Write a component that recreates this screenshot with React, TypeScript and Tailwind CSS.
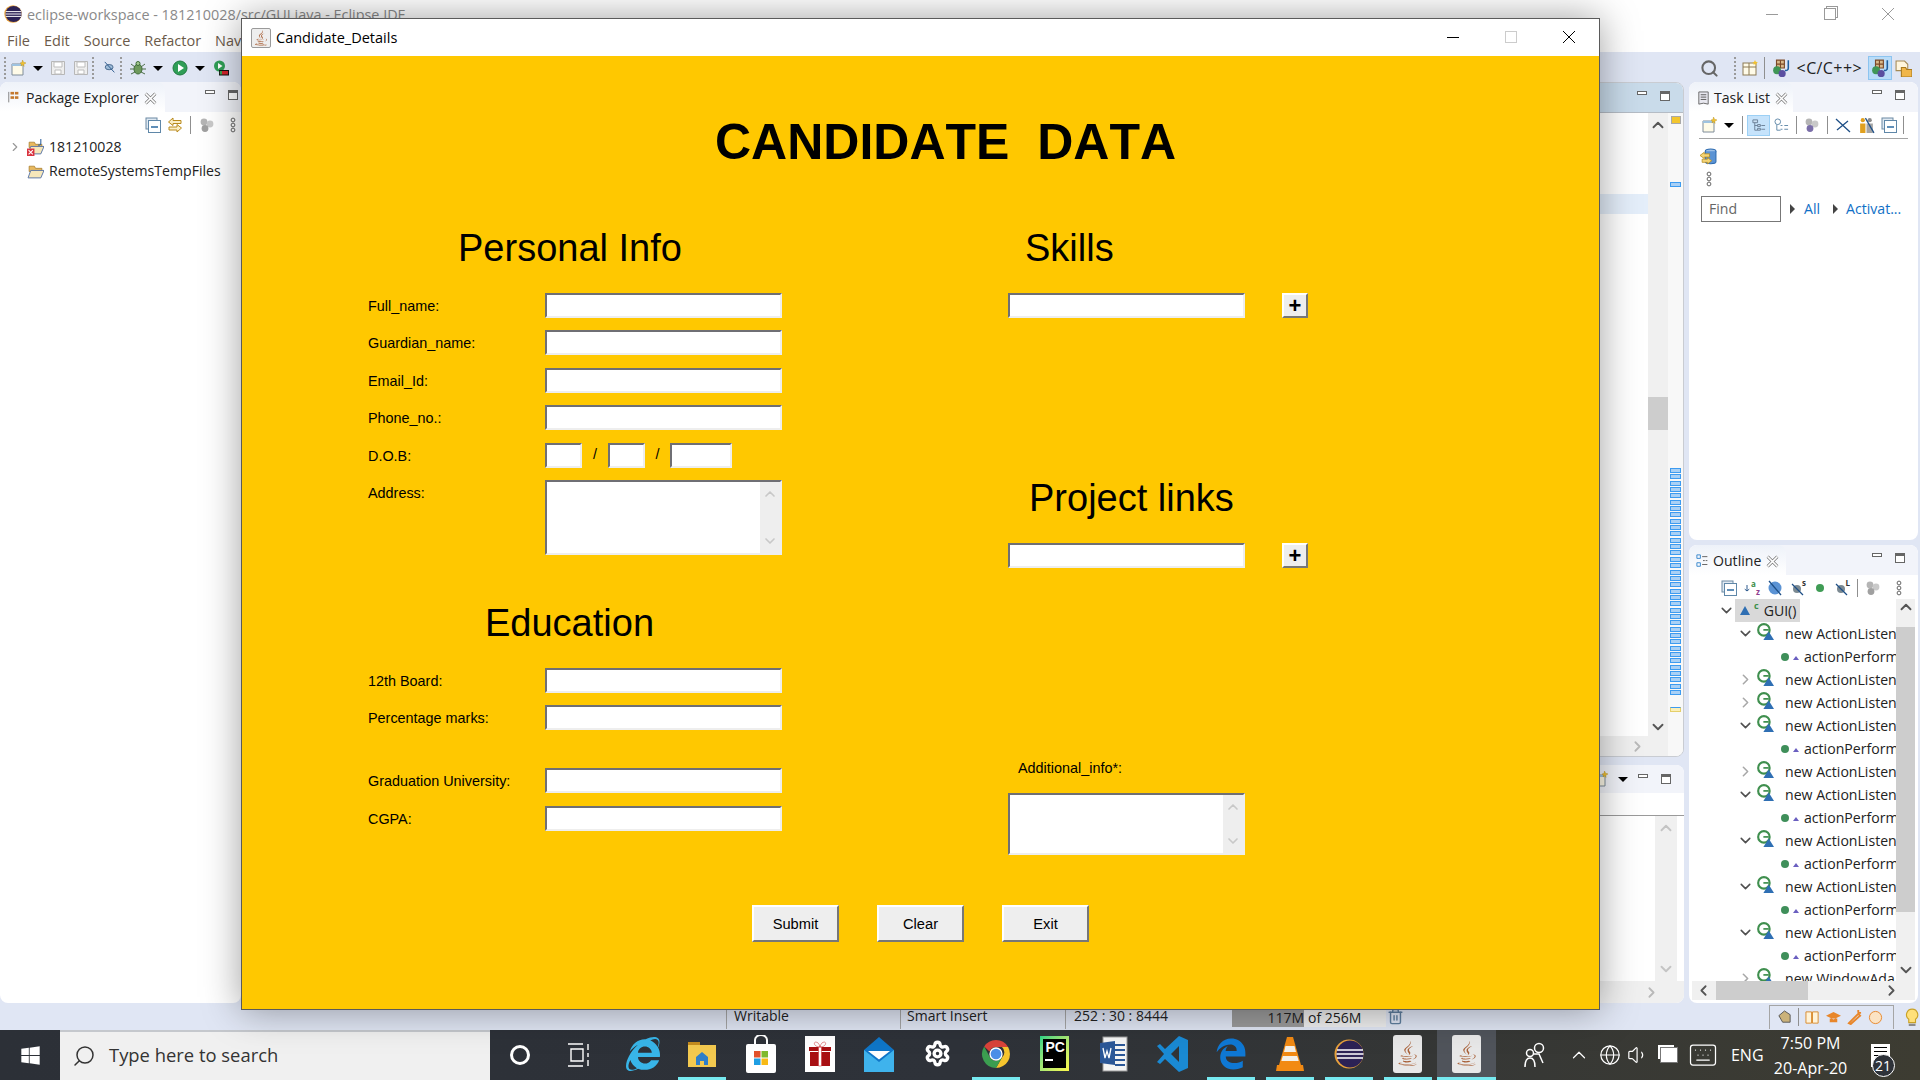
import React from 'react';
import { ChevronDown, ChevronRight, ChevronUp, ChevronLeft, Search, Settings, Globe, Volume1, Keyboard, Trash2 } from 'lucide-react';
import { FaWindows, FaInternetExplorer, FaJava } from 'react-icons/fa';
import { FaEdgeLegacy } from 'react-icons/fa6';

const uiFont = "font-['Open_Sans','Noto_Sans',sans-serif]";
const javaFont = "font-['Liberation_Sans',Arial,sans-serif]";

/* ---------- small eclipse icons ---------- */

const Icon: React.FC<{ size?: number; children: React.ReactNode; className?: string }> = ({ size = 16, children, className }) => (
    <svg width={size} height={size} viewBox="0 0 16 16" className={className} fill="none">
        {children}
    </svg>
);

const CollapseAll = () => (
    <Icon>
        <rect x="1" y="1" width="11" height="11" fill="#dfe9f2" stroke="#6d8aa3" />
        <rect x="3.5" y="3.5" width="12" height="12" fill="#fff" stroke="#5f87a8" />
        <path d="M6 10h7" stroke="#2b6aa0" strokeWidth="1.6" />
    </Icon>
);

const SyncArrows = () => (
    <Icon>
        <path d="M6 1 1.5 5 6 8.5V6.5h8v-3H6z" fill="#fbeec4" stroke="#b98a1d" />
        <path d="M10 7.5 14.5 11 10 15v-2H2v-3h8z" fill="#fbeec4" stroke="#b98a1d" />
    </Icon>
);

const Balls = ({ purple = false }: { purple?: boolean }) => (
    <Icon>
        <circle cx="5" cy="5" r="3.4" fill="#b5b5b5" />
        <circle cx="11" cy="7" r="3.4" fill="#c9c9c9" />
        <circle cx="6" cy="11.5" r="3.4" fill={purple ? '#7a6ea8' : '#a0a0a0'} />
    </Icon>
);

const MenuDots = () => (
    <Icon>
        <circle cx="8" cy="3" r="1.9" stroke="#666" />
        <circle cx="8" cy="8" r="1.9" stroke="#666" />
        <circle cx="8" cy="13" r="1.9" stroke="#666" />
    </Icon>
);

const CloseTab = () => (
    <Icon size={13}>
        <path d="M2 2l12 12M14 2 2 14" stroke="#777" strokeWidth="3.6" />
        <path d="M2 2l12 12M14 2 2 14" stroke="#fff" strokeWidth="1.8" />
    </Icon>
);

const Grip = () => <div className="w-0 h-[22px] border-l-2 border-dotted border-[#9a9a9a] mx-[3px]" />;
const Sep = ({ className = 'h-[18px]' }: { className?: string }) => <div className={`w-px bg-[#8f8f8f] ${className}`} />;
const Drop = () => <div className="w-0 h-0 border-x-[5px] border-x-transparent border-t-[5px] border-t-black" />;

const ViewButtons = () => (
    <div className="flex items-start gap-[13px] self-start pt-[8px]">
        <div className="w-[10px] h-[4px] border border-[#666] bg-white" />
        <div className="w-[10px] h-[10px] border border-[#666] border-t-[3px] bg-white" />
    </div>
);

const NewFile = ({ star = true }: { star?: boolean }) => (
    <Icon>
        <path d="M2 4h11v11H2z" fill="#fffbe8" stroke="#7f8c99" />
        <path d="M2 4h11v2H2z" fill="#9fc3e0" />
        {star && <path d="M12.5 0l1 2.2L16 3l-2.2 1 .2 2.4-1.5-1.5L11 6l.5-2L10 3l2-.5z" fill="#f2c230" stroke="#b78a12" strokeWidth=".4" />}
    </Icon>
);

const Floppy = () => (
    <Icon>
        <path d="M1.5 1.5h13v13h-13z" fill="#eeeeee" stroke="#b7b7b7" />
        <path d="M4 2h8v5H4zM5 10h6v4H5z" fill="#fff" stroke="#bdbdbd" />
    </Icon>
);

const RunCircle = () => (
    <Icon>
        <circle cx="8" cy="8" r="7" fill="#2f9e56" stroke="#1f7a3f" />
        <path d="M6 4l6 4-6 4z" fill="#fff" />
    </Icon>
);

const Bug = () => (
    <Icon>
        <ellipse cx="8" cy="9" rx="4" ry="5" fill="#6e9a5c" stroke="#3e6b37" />
        <path d="M1 4l4 3M15 4l-4 3M0 9h4M16 9h-4M1 14l4-2M15 14l-4-2" stroke="#4c6d48" />
        <circle cx="8" cy="3.5" r="2" fill="#a4c98f" stroke="#3e6b37" />
    </Icon>
);

const Coverage = () => (
    <Icon>
        <circle cx="6.5" cy="6" r="5.5" fill="#2f9e56" />
        <path d="M5 3l4.5 3L5 9z" fill="#fff" />
        <rect x="6" y="10" width="10" height="5.5" fill="#111" />
        <rect x="9" y="11" width="6" height="3.5" fill="#d2232a" />
        <rect x="6.8" y="11" width="2.2" height="3.5" fill="#3ea34a" />
    </Icon>
);

const PerspJava = () => (
    <Icon size={18}>
        <path d="M4 1h7v7H4z" fill="#d8b98a" stroke="#7c4a28" />
        <path d="M7.5 1v7M4 4.5h7" stroke="#7c4a28" />
        <circle cx="4.5" cy="10" r="3.5" fill="#3f9656" />
        <circle cx="9" cy="13" r="3.2" fill="#5a4fa0" />
        <path d="M14.5 1v7c0 2-1.5 2.5-3 2" stroke="#1f5f9e" strokeWidth="1.4" />
    </Icon>
);

const TreeFolder = ({ error = false }: { error?: boolean }) => (
    <Icon size={17}>
        <path d="M2 3h5l1 2h6v3H2z" fill="#e9b95e" stroke="#a5792a" strokeWidth=".7" />
        <path d="M1 14l2.5-7H16l-3 7z" fill="#f6e7ba" stroke="#5a76a8" strokeWidth=".9" />
        {error && <rect x="0" y="9" width="7" height="7" fill="#d9333f" />}
        {error && <path d="M1.5 10.5l4 4M5.5 10.5l-4 4" stroke="#fff" />}
        {error && <path d="M13 0v4c0 1.5-1 2-2.500 1.700" stroke="#2a5f9e" />}
    </Icon>
);

const OutlineNew = () => (
    <Icon size={17}>
        <circle cx="6.5" cy="6.5" r="5.4" stroke="#3f8f4e" strokeWidth="2" />
        <path d="M6 6.500h5" stroke="#3f8f4e" strokeWidth="1.600" />
        <path d="M11 8l5 8H6z" fill="#2f6fb3" />
    </Icon>
);

// hidden-member toolbar icons in the outline, the letter is a small badge
const HideMember = ({ letter }: { letter: string }) => (
    <div className="relative w-[16px] h-[16px]">
        <Icon><circle cx="7" cy="9" r="4" fill="#7c8a92" /><path d="M2 4l11 11" stroke="#1e4f86" strokeWidth="1.300" /></Icon>
        <span className="absolute right-0 -top-[2px] text-[8px] leading-[9px] font-bold text-[#333]">{letter}</span>
    </div>
);

const Chev = ({ open }: { open: boolean }) =>
    open ? <ChevronDown size={17} strokeWidth={2.2} color="#505050" /> : <ChevronRight size={17} strokeWidth={2.2} color="#a8a8a8" />;

/* ---------- eclipse panels ---------- */

const OutlineRow: React.FC<{ type: 'open' | 'closed' | 'action'; label?: string }> = ({ type, label = 'new ActionListen' }) => {
    if (type === 'action') {
        return (
            <div className="h-[23px] flex items-center pl-[92px] whitespace-nowrap">
                <div className="shrink-0 w-[8px] h-[8px] rounded-full bg-[#3f8f5a]" />
                <div className="shrink-0 ml-[4px] w-0 h-0 border-x-[3.5px] border-x-transparent border-b-[4px] border-b-[#6a5fc0] mt-[3px]" />
                <span className="ml-[5px]">actionPerform</span>
            </div>
        );
    }
    return (
        <div className="h-[23px] flex items-center pl-[48px] whitespace-nowrap">
            <div className="shrink-0 w-[17px] flex justify-center"><Chev open={type === 'open'} /></div>
            <div className="shrink-0 ml-[3px] -mt-[4px]"><OutlineNew /></div>
            <span className="ml-[11px]">{label}</span>
        </div>
    );
};

const outlineRows: { type: 'open' | 'closed' | 'action'; label?: string }[] = [
    { type: 'open' }, { type: 'action' }, { type: 'closed' }, { type: 'closed' },
    { type: 'open' }, { type: 'action' }, { type: 'closed' }, { type: 'open' },
    { type: 'action' }, { type: 'open' }, { type: 'action' }, { type: 'open' },
    { type: 'action' }, { type: 'open' }, { type: 'action' }, { type: 'closed', label: 'new WindowAda' },
];

const rulerTicks = Array.from({ length: 36 });

const TabHeader: React.FC<{ icon: React.ReactNode; title: string; width: string; pad?: string }> = ({ icon, title, width, pad = 'pr-[13px]' }) => (
    <div className={`h-[30px] shrink-0 bg-[#f2f4fa] rounded-t-[8px] flex items-stretch justify-between ${pad}`}>
        <div className={`${width} bg-gradient-to-b from-[#eef2f9] to-white rounded-t-[8px] flex items-center pl-[7px] gap-[5px] pt-[2px] text-[#222] whitespace-nowrap`}>
            {icon}
            <span>{title}</span>
            <CloseTab />
        </div>
        <ViewButtons />
    </div>
);

const PackageExplorer = () => (
    <div className="w-[241px] bg-white rounded-[8px] overflow-hidden shrink-0">
        <TabHeader
            width="w-[165px]"
            title="Package Explorer"
            pad="pr-[3px]"
            icon={<Icon size={14}><path d="M2 1v12" stroke="#777" /><rect x="4" y="1" width="4" height="3" fill="#c4792f" /><rect x="9" y="1" width="4" height="3" fill="#c4792f" /><rect x="4" y="6" width="4" height="3" fill="#c4792f" /><rect x="9" y="6" width="4" height="3" fill="#c4792f" /></Icon>}
        />
        <div className="h-[24px] flex items-center justify-end pr-0 mt-[1px]">
            <CollapseAll />
            <div className="ml-[6px]"><SyncArrows /></div>
            <div className="ml-[7px]"><Sep /></div>
            <div className="ml-[8px]"><Balls /></div>
            <div className="ml-[10px]"><MenuDots /></div>
        </div>
        <div className="flex items-center h-[24px] pl-[8px] -mt-[2px]">
            <ChevronRight size={14} color="#999" />
            <div className="ml-[5px]"><TreeFolder error /></div>
            <span className="ml-[5px]">181210028</span>
        </div>
        <div className="flex items-center h-[24px] pl-[27px]">
            <TreeFolder />
            <span className="ml-[5px]">RemoteSystemsTempFiles</span>
        </div>
    </div>
);

const EditorColumn = () => (
    <div className="flex-1 flex flex-col gap-[8px]">
        {/* the editor, only its right edge shows past the dialog */}
        <div className="h-[675px] shrink-0 bg-white rounded-[8px] border border-[#c9ccd2] overflow-hidden flex flex-col">
            <div className="h-[30px] shrink-0 bg-[#c9dbea] border-b border-[#b5bcc5] flex justify-end pr-[13px]">
                <ViewButtons />
            </div>
            <div className="flex-1 flex min-h-0">
                <div className="flex-1 flex flex-col">
                    <div className="flex-1 pt-[81px]">
                        <div className="h-[20px] bg-[#e4eefa]" />
                    </div>
                    <div className="h-[20px] bg-[#f0f0f0] flex items-center justify-end pr-[2px]">
                        <ChevronRight size={17} color="#b9b9b9" strokeWidth={2.5} />
                    </div>
                </div>
                <div className="w-[20px] bg-[#f0f0f0] flex flex-col items-center pt-[3px] pb-[20px]">
                    <ChevronUp size={18} color="#555" strokeWidth={2.5} />
                    <div className="mt-[263px] w-full h-[33px] bg-[#cdcdcd]" />
                    <div className="flex-1" />
                    <ChevronDown size={18} color="#555" strokeWidth={2.5} />
                </div>
                <div className="w-[15px] bg-[#f8f8f8] flex flex-col items-center pt-[3px]">
                    <div className="w-[10px] h-[8px] bg-[#f3c62e] border border-[#a9a9a9]" />
                    <div className="mt-[58px] w-[11px] h-[5px] bg-[#a9d0f5] border border-[#3d9bf0]" />
                    <div className="mt-[281px] flex flex-col gap-[1.35px]">
                        {rulerTicks.map((_, i) => (
                            <div key={i} className="w-[11px] h-[5px] bg-[#a9d0f5] border border-[#3d9bf0]" />
                        ))}
                    </div>
                    <div className="mt-[12px] w-[11px] h-[5px] bg-[#fbefb8] border border-[#e5cf6a] border-t-[#3d9bf0]" />
                </div>
            </div>
        </div>
        {/* console below the editor */}
        <div className="h-[238px] bg-white rounded-[8px] overflow-hidden flex flex-col">
            <div className="h-[28px] shrink-0 bg-[#f2f4fa] flex items-center justify-end gap-[10px] pr-[13px]">
                <NewFile />
                <Drop />
                <div className="-mt-[8px]"><ViewButtons /></div>
            </div>
            <div className="h-[23px] shrink-0 border-b border-[#9a9a9a]" />
            <div className="flex-1 flex min-h-0">
                <div className="flex-1" />
                <div className="w-[22px] mr-[7px] bg-[#f0f0f0] flex flex-col items-center justify-between py-[3px]">
                    <ChevronUp size={18} color="#c4c4c4" strokeWidth={2.5} />
                    <ChevronDown size={18} color="#c4c4c4" strokeWidth={2.5} />
                </div>
            </div>
            <div className="h-[22px] shrink-0 bg-[#f0f0f0] flex items-center justify-end pr-[24px]">
                <ChevronRight size={17} color="#b9b9b9" strokeWidth={2.5} />
            </div>
        </div>
    </div>
);

const TaskList = () => (
    <div className="h-[458px] shrink-0 bg-white rounded-[8px] overflow-hidden">
        <TabHeader
            width="w-[104px]"
            title="Task List"
            icon={<div className="-mr-[2px]"><Icon size={15}><path d="M3 1h10v13l-5-1-5 1z" fill="#e8e8f0" stroke="#666" /><path d="M5 4h6M5 6.500h6M5 9h6" stroke="#555" /></Icon></div>}
        />
        <div className="mx-[10px] h-[27px] border-b border-[#a5a5a5] flex items-center pl-[2px]">
            <NewFile />
            <div className="ml-[7px]"><Drop /></div>
            <div className="ml-[8px]"><Sep /></div>
            <div className="ml-[4px] w-[23px] h-[21px] bg-[#c6e3fb] border border-[#9cd0f5] flex items-center justify-center">
                <Icon size={15}><path d="M2 2h5v3H2zM7 7h3v2H7zM7 11h3v2H7z" fill="#c9dff2" stroke="#6a7f96" /><path d="M4 5v8h3M4 8h3M11 8h4M11 12h4" stroke="#6a7f96" /></Icon>
            </div>
            <div className="ml-[3.500px]"><Icon size={15}><circle cx="4" cy="4" r="3" fill="#fff" stroke="#5f87a8" /><path d="M7 8h2M7 12h2M11 8h4M11 12h4M3 7v6h4" stroke="#5f87a8" /></Icon></div>
            <div className="ml-[7.500px]"><Sep /></div>
            <div className="ml-[7px]"><Balls purple /></div>
            <div className="ml-[7px]"><Sep /></div>
            <div className="ml-[7px]"><Icon size={16}><path d="M1 2l14 13M2 13L13 4" stroke="#1e4f86" strokeWidth="1.3" /></Icon></div>
            <div className="ml-[6.500px]"><Icon size={17}><circle cx="4.500" cy="3" r="2" fill="#e0a01e" /><path d="M2 6h5v9H2z" fill="#e0a01e" /><circle cx="11" cy="3" r="2" fill="#8c8c8c" /><path d="M8 6h6v9H8z" fill="#a5a5a5" /><path d="M7 1l8 14" stroke="#1e4f86" strokeWidth="1.200" /></Icon></div>
            <div className="ml-[6.500px]"><CollapseAll /></div>
            <div className="ml-[6px]"><Sep /></div>
        </div>
        <div className="pl-[11px] pt-[9px]">
            <Icon size={17}>
                <ellipse cx="10" cy="3" rx="5" ry="2" fill="#9dc0e6" stroke="#2e6bb0" />
                <path d="M5 3v10c0 2.500 10 2.500 10 0V3" fill="#5b93d4" stroke="#2e6bb0" />
                <path d="M4 4L0 7l4 3V8.500h5v-3H4zM7 9l4 3-4 3v-1.500H2v-3h5z" fill="#f4d475" stroke="#b48a1d" strokeWidth=".7" />
            </Icon>
        </div>
        <div className="pl-[12px] pt-[6px]"><MenuDots /></div>
        <div className="mt-[9px] flex items-center pl-[12px]">
            <div className="w-[80px] h-[26px] border border-[#777] flex items-center pl-[7px] text-[#666]">Find</div>
            <div className="ml-[9px] w-0 h-0 border-y-[5px] border-y-transparent border-l-[5px] border-l-[#444]" />
            <span className="ml-[9px] text-[#0f6fc6]">All</span>
            <div className="ml-[13px] w-0 h-0 border-y-[5px] border-y-transparent border-l-[5px] border-l-[#444]" />
            <span className="ml-[8px] text-[#0f6fc6]">Activat...</span>
        </div>
    </div>
);

const OutlinePanel = () => (
    <div className="flex-1 min-h-0 bg-white rounded-[8px] overflow-hidden flex flex-col">
        <TabHeader
            width="w-[97px]"
            title="Outline"
            icon={<div className="-mr-[2px]"><Icon size={14}><path d="M1 1h4v4H1zM1 10h4v4H1z" stroke="#2a7fc9" /><path d="M7 3h6M7 12h6M8 7.500h2M11 7.500h2" stroke="#555" /></Icon></div>}
        />
        <div className="h-[26px] shrink-0 flex items-center justify-end gap-[7px] pr-[11px]">
            <CollapseAll />
            <div className="w-[16px] h-[16px] flex text-[8px] leading-[8px] font-bold">
                <Icon size={6} className="h-[16px]"><path d="M8 0v15M8 16l-6-5M8 16l6-5" stroke="#1e4f86" strokeWidth="2.500" /></Icon>
                <div className="ml-[1px] flex flex-col">
                    <span className="text-[#3d8f4a]">a</span>
                    <span className="ml-[5px] text-[#8f3d8f]">z</span>
                </div>
            </div>
            <Icon size={16}><circle cx="8" cy="8" r="6.500" fill="#5b93d4" /><path d="M2 1l12 14" stroke="#1e4f86" strokeWidth="1.300" /></Icon>
            <HideMember letter="s" />
            <div className="w-[8px] h-[8px] mx-[3px] rounded-full bg-[#3f9c55]" />
            <HideMember letter="L" />
            <Sep />
            <Balls />
            <div className="ml-[3px]"><MenuDots /></div>
        </div>
        <div className="flex-1 flex min-h-0 -mt-[2px]">
            <div className="flex-1 min-w-0 overflow-hidden">
                <div className="h-[23px] flex items-center pl-[29px]">
                    <ChevronDown size={17} strokeWidth={2.2} color="#505050" />
                    <div className="ml-[0px] w-[65px] h-[23px] bg-[#d9d9d9] flex items-center pl-[5px]">
                        <div className="w-0 h-0 border-x-[5px] border-x-transparent border-b-[9px] border-b-[#2f6fb3]" />
                        <span className="ml-[4px] -mt-[9px] text-[9px] font-bold text-[#3d8f4a]">c</span>
                        <span className="ml-[5px]">GUI()</span>
                    </div>
                </div>
                {outlineRows.map((r, i) => (
                    <OutlineRow key={i} type={r.type} label={r.label} />
                ))}
            </div>
            <div className="w-[19px] mr-[3px] bg-[#f0f0f0] flex flex-col items-center">
                <ChevronUp size={18} color="#555" strokeWidth={2.5} className="mt-[-1px]" />
                <div className="mt-[11px] w-full h-[285px] bg-[#cdcdcd]" />
                <div className="flex-1" />
                <ChevronDown size={18} color="#555" strokeWidth={2.5} className="mb-[2px]" />
            </div>
        </div>
        <div className="h-[19px] shrink-0 bg-[#f0f0f0] flex items-center mx-[3px] mb-[3px] text-[#555]">
            <ChevronLeft size={17} strokeWidth={2.5} className="ml-[3px]" />
            <div className="ml-[4px] w-[92px] h-full bg-[#cdcdcd]" />
            <div className="flex-1" />
            <ChevronRight size={17} strokeWidth={2.5} className="mr-[15px]" />
        </div>
    </div>
);

/* ---------- taskbar ---------- */

const JavaTile = () => (
    <div className="w-[29px] h-[38px] bg-[#e8e8e8] rounded-[3px] flex items-center justify-center">
        <FaJava size={25} color="#a9623a" />
    </div>
);

const ChromeLogo = () => (
    <svg width="30" height="30" viewBox="0 0 30 30">
        <path d="M15 1a14 14 0 0 1 12.100 7H15a7 7 0 0 0-6.500 4.500L3.200 7.500A14 14 0 0 1 15 1z" fill="#d9433a" />
        <path d="M27.100 8A14 14 0 0 1 15 29l6-10.500A7 7 0 0 0 21 8z" fill="#f6c52e" />
        <path d="M15 29A14 14 0 0 1 3.200 7.500L9 18.500A7 7 0 0 0 15 22l6-3.500z" fill="#3b9e50" />
        <circle cx="15" cy="15" r="6" fill="#4a8ee8" stroke="#fff" strokeWidth="1.300" />
    </svg>
);

const EclipseLogo = ({ size = 30 }: { size?: number }) => (
    <svg width={size} height={size} viewBox="0 0 30 30">
        <circle cx="15" cy="15" r="14.500" fill="#e9a23b" />
        <circle cx="16" cy="15" r="13.500" fill="#2c2255" />
        <path d="M3 11h26M2.500 15h27M3 19h26" stroke="#fff" strokeWidth="1.600" />
    </svg>
);

const taskbarApps: { key: string; icon: React.ReactNode; running?: boolean; active?: boolean }[] = [
    { key: 'ie', icon: <FaInternetExplorer size={34} color="#38b5e8" /> },
    {
        key: 'folder',
        running: true,
        icon: (
            <svg width="30" height="30" viewBox="0 0 30 30">
                <path d="M1 3h12v4H1z" fill="#c58c1e" />
                <path d="M1 6h28v22H1z" fill="#f3c94f" />
                <path d="M9 18l6-5 6 5v8h-4v-4h-4v4H9z" fill="#2f7fc9" />
            </svg>
        ),
    },
    {
        key: 'store',
        icon: (
            <svg width="30" height="38" viewBox="0 0 30 38">
                <path d="M9 10V5a6 5 0 0 1 12 0v5" stroke="#fff" strokeWidth="2" fill="none" />
                <rect y="9" width="30" height="29" rx="2" fill="#fff" />
                <rect x="8" y="16" width="6.500" height="6.500" fill="#e2512b" />
                <rect x="15.500" y="16" width="6.500" height="6.500" fill="#7fba2d" />
                <rect x="8" y="23.500" width="6.500" height="6.500" fill="#1f9ee3" />
                <rect x="15.500" y="23.500" width="6.500" height="6.500" fill="#f7ba17" />
            </svg>
        ),
    },
    {
        key: 'gift',
        icon: (
            <svg width="30" height="36" viewBox="0 0 30 36">
                <rect width="30" height="36" fill="#fff" />
                <path d="M5 16h20v14H5zM4 11h22v4H4z" fill="#a80f12" />
                <path d="M13.500 11h3v19h-3zM15 11c-6 0-7-5-4-5s4 5 4 5c0 0 1-5 4-5s2 5-4 5z" fill="#fff" stroke="#c9262a" strokeWidth=".5" />
            </svg>
        ),
    },
    {
        key: 'mail',
        icon: (
            <svg width="30" height="36" viewBox="0 0 30 36">
                <path d="M15 1 30 14v22H0V14z" fill="#0f76c8" />
                <path d="M0 14l15 12 15-12v22H0z" fill="#3fb3ec" />
                <path d="M4 15h22l-11 8.500z" fill="#fff" />
            </svg>
        ),
    },
    { key: 'settings', icon: <Settings size={27} color="#fff" strokeWidth={3} /> },
    { key: 'chrome', running: true, icon: <ChromeLogo /> },
    {
        key: 'pycharm',
        icon: (
            <div className="w-[29px] h-[35px] bg-gradient-to-br from-[#21d789] to-[#fcf84a] p-[3px]">
                <div className="w-full h-full bg-black text-white text-[14px] font-bold leading-[16px] pl-[2px] font-['Liberation_Sans',sans-serif]">
                    PC
                    <div className="w-[8px] h-[2px] bg-white mt-[4px]" />
                </div>
            </div>
        ),
    },
    {
        key: 'word',
        icon: (
            <svg width="30" height="36" viewBox="0 0 30 36">
                <rect x="4" y="1" width="24" height="34" fill="#f4f4f4" stroke="#9a9a9a" />
                <path d="M16 9h10M16 14h10M16 19h10M16 24h10M16 29h10" stroke="#2b5797" strokeWidth="2" />
                <path d="M1 7l15-2v24L1 27z" fill="#2b5797" />
                <path d="M4 12l2 10 2-7 2 7 2-10" stroke="#fff" strokeWidth="1.300" fill="none" />
            </svg>
        ),
    },
    {
        key: 'vscode',
        icon: (
            <svg width="32" height="38" viewBox="0 0 32 38">
                <path d="M22 1 31 5v28l-9 4L8 24l-5 5-3-2 7-8-7-8 3-2 5 5zM22 11l-8 8 8 8z" fill="#1a8ad4" />
            </svg>
        ),
    },
    { key: 'edge', running: true, icon: <FaEdgeLegacy size={32} color="#0f78d4" /> },
    {
        key: 'vlc',
        running: true,
        icon: (
            <svg width="28" height="36" viewBox="0 0 28 36">
                <path d="M11 1h6l8 28H3z" fill="#f28a13" />
                <path d="M9.500 10h9l1.500 6H8zM6.800 20h14.400l1.500 5H5.300z" fill="#f4f0e8" />
                <path d="M1 29h26l1 6H0z" fill="#f28a13" />
            </svg>
        ),
    },
    { key: 'eclipse', running: true, icon: <EclipseLogo /> },
    { key: 'java', running: true, icon: <JavaTile /> },
    { key: 'java-active', running: true, active: true, icon: <JavaTile /> },
];

const Taskbar = () => (
    <div className={`h-[50px] shrink-0 bg-gradient-to-r from-[#2c3037] via-[#2e3239] to-[#3d3c32] flex items-stretch text-white ${uiFont}`}>
        <div className="w-[60px] flex items-center justify-center"><FaWindows size={21} /></div>
        <div className="w-[430px] bg-[#f0f0f0] border-t-2 border-[#c5c8cd] flex items-center pl-[12px] text-[#333]">
            <Search size={24} strokeWidth={1.5} className="-scale-x-100" />
            <span className="ml-[13px] -mt-[1px] text-[18.400px] leading-none">Type here to search</span>
        </div>
        <div className="w-[59px] flex items-center justify-center">
            <div className="w-[20px] h-[20px] rounded-full border-[3px] border-white" />
        </div>
        <div className="w-[65px] flex items-center justify-center pr-[5px]">
            <svg width="22" height="24" viewBox="0 0 22 24" stroke="#fff" fill="none" strokeWidth="1.400">
                <path d="M0 1h15M0 23h15M3 6h12v12H3zM20 1v6M20 10v4M20 17v6" />
            </svg>
        </div>
        {taskbarApps.map((app) => (
            <div key={app.key} className={`w-[58.8px] flex flex-col items-center ${app.active ? 'bg-[#50545b]' : ''}`}>
                <div className="flex-1 flex items-center justify-center">{app.icon}</div>
                <div className={`h-[3px] ${app.active ? 'w-full bg-[#76e9f0]' : app.running ? 'w-[48px] bg-[#76e9f0]' : ''}`} />
            </div>
        ))}
        <div className="flex-1 flex items-center">
            <svg width="22" height="28" viewBox="0 0 22 28" stroke="#fff" fill="none" strokeWidth="1.500" className="ml-[28px]">
                <circle cx="15" cy="7" r="4.500" />
                <circle cx="6" cy="12" r="3.500" />
                <path d="M10 13l5 0 4 9M1 26c0-6 2-9 5-9s5 3 5 9" />
            </svg>
            <ChevronUp size={22} strokeWidth={1.300} className="ml-[22px]" />
            <Globe size={22} strokeWidth={1.300} className="ml-[9px]" />
            <Volume1 size={22} strokeWidth={1.300} className="ml-[6px]" />
            <div className="ml-[11px] w-[18px] h-[16px] bg-white border border-[#777] shadow-[-3px_-3px_0_-1px_#fff]" />
            <Keyboard size={30} strokeWidth={1} className="ml-[10px]" />
            <span className="ml-[13px] text-[16px]">ENG</span>
            <div className="ml-[8px] pt-[2px] w-[78px] flex flex-col items-center text-[16px] leading-[25px]">
                <span>7:50 PM</span>
                <span className="whitespace-nowrap">20-Apr-20</span>
            </div>
            <div className="ml-[21px] relative">
                <div className="w-[19px] h-[23px] bg-white flex flex-col gap-[3px] p-[3px]">
                    <div className="h-[1px] bg-black" />
                    <div className="h-[1px] bg-black" />
                    <div className="h-[1px] bg-black" />
                </div>
                <div className="absolute -right-[5px] -bottom-[10px] w-[23px] h-[23px] rounded-full bg-[#2e3239] border border-white flex items-center justify-center text-[14px]">
                    21
                </div>
            </div>
        </div>
    </div>
);

/* ---------- the java dialog ---------- */

const fieldBevel = 'bg-white border-2 border-t-[#6f6f74] border-l-[#6f6f74] border-r-[#eeeeee] border-b-[#eeeeee]';
const Field = ({ className = 'w-[237px]' }: { className?: string }) => <input type="text" className={`h-[25px] block ${fieldBevel} ${className}`} />;

const TextBox = ({ height }: { height: string }) => (
    <div className={`w-[237px] ${height} ${fieldBevel} flex justify-end`}>
        <div className="w-[20px] bg-[#eeeeee] flex flex-col items-center justify-between py-[4px]">
            <ChevronUp size={16} color="#c8c8c8" strokeWidth={2.5} />
            <ChevronDown size={16} color="#c8c8c8" strokeWidth={2.5} />
        </div>
    </div>
);

const Row: React.FC<{ label: string; children: React.ReactNode }> = ({ label, children }) => (
    <>
        <div className="leading-[26px] whitespace-nowrap">{label}</div>
        <div>{children}</div>
    </>
);

const Heading: React.FC<{ className: string; children: React.ReactNode }> = ({ className, children }) => (
    <h2 className={`h-[45px] leading-[45px] text-[38px] whitespace-nowrap ${className}`}>{children}</h2>
);

const grid = 'grid grid-cols-[177px_237px] auto-rows-[25px] gap-y-[12.4px]';

const PlusButton = () => (
    <button className="w-[26px] h-[25px] bg-[#eeeeee] border-2 border-t-white border-l-white border-r-[#777] border-b-[#777] flex items-center justify-center text-[22px] font-bold leading-none">
        +
    </button>
);

const DialogButton = ({ label }: { label: string }) => (
    <button className="w-[87px] h-[37px] bg-[#eeeeee] border-2 border-t-white border-l-white border-r-[#777] border-b-[#777] text-[14.67px] text-black">
        {label}
    </button>
);

const CandidateDialog = () => (
    <div className="absolute left-[241px] top-[18px] w-[1359px] h-[992px] bg-white border border-[#5a5a5a] shadow-[0_0_36px_rgba(0,0,0,0.38)] flex flex-col">
        <div className="h-[37px] shrink-0 flex items-center pl-[9px] text-black">
            <div className="w-[20px] h-[20px] border border-[#9a9a9a] rounded-[2px] bg-[#eeeeee] flex items-center justify-center">
                <FaJava size={16} color="#a9623a" />
            </div>
            <span className={`ml-[5px] ${uiFont} text-[14.500px]`}>Candidate_Details</span>
            <div className="ml-auto flex items-center gap-[46px] pr-[24px] -mt-[1px]">
                <div className="w-[12px] h-px bg-black" />
                <div className="w-[12px] h-[12px] border border-[#cccccc]" />
                <svg width="12" height="12" viewBox="0 0 12 12" stroke="#000" fill="none"><path d="M0 0l12 12M12 0 0 12" /></svg>
            </div>
        </div>
        <div className={`flex-1 bg-[#ffc800] text-black text-[14.400px] ${javaFont}`}>
            <h1 className="h-[173px] flex items-center justify-center pl-[50px] text-[50px] font-bold whitespace-pre [font-kerning:none]">CANDIDATE  DATA</h1>
            <div className="-mt-[3px] flex pl-[126px]">
                <div className="w-[414px]">
                    <Heading className="ml-[90px] mb-[22px]">Personal Info</Heading>
                    <div className={grid}>
                        <Row label="Full_name:"><Field /></Row>
                        <Row label="Guardian_name:"><Field /></Row>
                        <Row label="Email_Id:"><Field /></Row>
                        <Row label="Phone_no.:"><Field /></Row>
                        <Row label="D.O.B:">
                            <div className="flex items-center">
                                <Field className="w-[37px]" />
                                <span className="w-[26px] text-center">/</span>
                                <Field className="w-[37px]" />
                                <span className="w-[25px] text-center">/</span>
                                <Field className="w-[62px]" />
                            </div>
                        </Row>
                        <Row label="Address:"><TextBox height="h-[75px]" /></Row>
                    </div>
                    <Heading className="mt-[96px] ml-[117px] mb-[22px]">Education</Heading>
                    <div className={grid}>
                        <Row label="12th Board:"><Field /></Row>
                        <Row label="Percentage marks:"><Field /></Row>
                    </div>
                    <div className={`${grid} mt-[38px]`}>
                        <Row label="Graduation University:"><Field /></Row>
                        <Row label="CGPA:"><Field /></Row>
                    </div>
                </div>
                <div className="ml-[226px]">
                    <Heading className="ml-[17px] mb-[22px]">Skills</Heading>
                    <div className="flex items-center gap-[37px]"><Field /><PlusButton /></div>
                    <Heading className="mt-[158px] ml-[21px] mb-[22px]">Project links</Heading>
                    <div className="flex items-center gap-[37px]"><Field /><PlusButton /></div>
                    <div className="mt-[190px] ml-[10px] h-[20px] leading-[20px]">Additional_info*:</div>
                    <div className="mt-[15px]"><TextBox height="h-[62px]" /></div>
                </div>
            </div>
            <div className="mt-[50px] ml-[510px] flex gap-[38px]">
                <DialogButton label="Submit" />
                <DialogButton label="Clear" />
                <DialogButton label="Exit" />
            </div>
        </div>
    </div>
);

/* ---------- page ---------- */

export default function App() {
    return (
        <div className={`relative w-[1920px] h-[1080px] overflow-hidden flex flex-col bg-[#e0e6f4] text-[14.100px] text-[#222] ${uiFont}`}>
            {/* window title */}
            <div className="h-[28px] shrink-0 bg-white flex items-center pl-[4px] pr-[26px]">
                <EclipseLogo size={18} />
                <span className="ml-[5px] pt-[1px] text-[14.400px] text-[#8a8a8a]">eclipse-workspace - 181210028/src/GUI.java - Eclipse IDE</span>
                <div className="ml-auto flex items-center gap-[46px] text-[#9a9a9a]">
                    <div className="w-[12px] h-px bg-[#9a9a9a]" />
                    <div className="w-[12px] h-[12px] border border-[#9a9a9a] shadow-[2px_-2px_0_-1px_#fff,2px_-2px_0_0_#9a9a9a]" />
                    <svg width="12" height="12" viewBox="0 0 12 12" stroke="#9a9a9a" fill="none"><path d="M0 0l12 12M12 0 0 12" /></svg>
                </div>
            </div>
            {/* menu */}
            <div className="h-[24px] shrink-0 bg-white flex items-center pl-[7px] pt-[2px] gap-[14px] text-[14.500px] text-[#6b5a4a]">
                <span>File</span>
                <span>Edit</span>
                <span>Source</span>
                <span>Refactor</span>
                <span>Navigate</span>
            </div>
            {/* toolbar */}
            <div className="h-[30px] shrink-0 flex items-center pl-[1px] pr-[8px] pt-[2px]">
                <Grip />
                <div className="ml-[1px]"><NewFile /></div>
                <div className="ml-[7px]"><Drop /></div>
                <div className="ml-[7px]"><Floppy /></div>
                <div className="ml-[7px]"><Floppy /></div>
                <Grip />
                <div className="ml-[6px]"><Icon size={14}><ellipse cx="7" cy="7" rx="4.500" ry="3" fill="#9fbcd8" stroke="#3f5f85" /><path d="M2 1l11 12" stroke="#1e4f86" /></Icon></div>
                <Grip />
                <div className="ml-[5px]"><Bug /></div>
                <div className="ml-[7px]"><Drop /></div>
                <div className="ml-[9px]"><RunCircle /></div>
                <div className="ml-[7px]"><Drop /></div>
                <div className="ml-[8px]"><Coverage /></div>
                <div className="ml-auto flex items-center">
                    <Search size={19} color="#666" strokeWidth={2.6} />
                    <div className="ml-[12px]"><Grip /></div>
                    <div className="ml-[3px]"><Icon><rect x="1" y="3" width="13" height="12" fill="#fffbe8" stroke="#8c7a55" /><path d="M1 7h13M7 3v12" stroke="#8c7a55" /><path d="M13 0l.8 1.700L16 2.300l-1.700 1 .2 2-1.500-1.200-1.500 1 .4-1.800L10 2.300l2-.4z" fill="#f2c230" /></Icon></div>
                    <div className="ml-[6px]"><Sep className="h-[22px]" /></div>
                    <div className="ml-[7px]"><PerspJava /></div>
                    <span className="ml-[7px] text-[16px] tracking-[0.4px]">&lt;C/C++&gt;</span>
                    <div className="ml-[6px] w-[24px] h-[24px] bg-[#b9dcf8] border border-[#8cc4f0] flex items-center justify-center"><PerspJava /></div>
                    <div className="ml-[3px]"><Icon size={17}><path d="M1 1h8l3 3v6H1z" fill="#fff6dd" stroke="#a58a55" /><path d="M6 7h4l1 2h5v7H6z" fill="#f0b64a" stroke="#a87a20" /></Icon></div>
                </div>
            </div>
            {/* workbench */}
            <div className="flex-1 min-h-0 flex gap-[5px] pr-[2px]">
                <PackageExplorer />
                <EditorColumn />
                <div className="w-[229px] shrink-0 flex flex-col gap-[5px]">
                    <TaskList />
                    <OutlinePanel />
                </div>
            </div>
            {/* status line */}
            <div className="h-[27px] shrink-0 flex items-center text-[14px] text-[#222] whitespace-nowrap">
                <div className="ml-[726px] w-[174px] h-[24px] border-l border-[#a5a5a5] pl-[7px]">Writable</div>
                <div className="w-[165px] h-[24px] border-l border-[#a5a5a5] pl-[6px]">Smart Insert</div>
                <div className="w-[167px] h-[24px] border-l border-[#a5a5a5] pl-[8px]">252 : 30 : 8444</div>
                <div className="w-[154px] h-[20px] relative bg-[#eeeeee] flex">
                    <div className="w-[72px] bg-[#9a9a9a] text-right">117M</div>
                    <div className="pl-[4px]">of 256M</div>
                </div>
                <Trash2 size={17} color="#5f7f9f" className="ml-[1px]" />
                <div className="ml-[365px] w-[125px] h-[24px] border border-[#a5a5a5] border-b-0 flex items-center gap-[6px] pl-[7px]">
                    <Icon size={15}><path d="M2 6l6-5 6 4v8H6z" fill="#cbb27a" stroke="#555" /></Icon>
                    <Sep />
                    <Icon size={15}><path d="M1 2h6v12H1zM8 2h6v12H8z" fill="#fff3d8" stroke="#d98a2b" /></Icon>
                    <Icon size={15}><path d="M0 6l8-4 8 4-8 4zM4 9v4h8V9" fill="#e8862a" /></Icon>
                    <Icon size={15}><path d="M2 14 12 4l2 2L4 15zM12 0v3M15 3h-3" stroke="#e8862a" strokeWidth="2" /></Icon>
                    <Icon size={15}><circle cx="8" cy="8" r="6.500" stroke="#e8862a" fill="#fbe3c4" /></Icon>
                </div>
                <div className="ml-[8px]"><Icon size={18}><path d="M9 1a5 5 0 0 1 3 9v3H6v-3A5 5 0 0 1 9 1z" fill="#ffe07a" stroke="#c9a227" /><path d="M6 15h6" stroke="#8c8c8c" strokeWidth="2" /></Icon></div>
            </div>
            <Taskbar />
            <CandidateDialog />
        </div>
    );
}
